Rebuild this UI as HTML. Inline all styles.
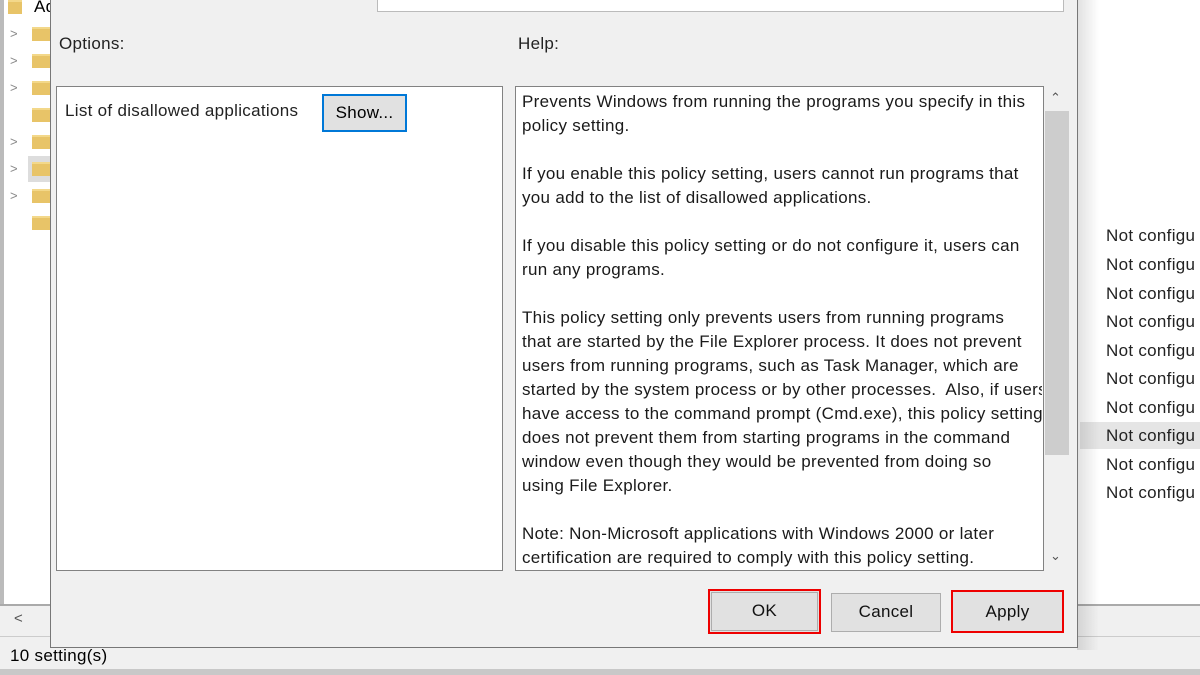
<!DOCTYPE html>
<html><head><style>
*{margin:0;padding:0;box-sizing:border-box}
body{width:1200px;height:675px;overflow:hidden;background:#fff;font-family:"Liberation Sans",sans-serif;position:relative;color:#000;letter-spacing:.3px}
.a{position:absolute}
.fold{position:absolute;left:32px;width:18px;height:14px;background:#e8c468;border-top:2px solid #f3d88a}
.chev{position:absolute;left:10px;color:#888;font-size:13px}
.nc{position:absolute;left:1106px;font-size:17px;color:#222;white-space:nowrap}
.help{font-size:17px;line-height:24px;color:#1a1a1a;white-space:nowrap;letter-spacing:.3px;overflow:hidden;width:520px}
.btn{position:absolute;background:#e1e1e1;border:1px solid #adadad;font-size:17px;text-align:center;color:#111}
</style></head><body>
<div class="a" style="left:0;top:0;width:4px;height:640px;background:#bbb"></div>
<div class="fold" style="top:0;left:8px;width:14px"></div>
<div class="a" style="left:34px;top:-3px;font-size:17px">Ad</div>
<div class="a" style="left:28px;top:156px;width:24px;height:26px;background:#ddd"></div>
<div class="chev" style="top:26px">&gt;</div><div class="fold" style="top:27px"></div>
<div class="chev" style="top:53px">&gt;</div><div class="fold" style="top:54px"></div>
<div class="chev" style="top:80px">&gt;</div><div class="fold" style="top:81px"></div>
<div class="fold" style="top:108px"></div>
<div class="chev" style="top:134px">&gt;</div><div class="fold" style="top:135px"></div>
<div class="chev" style="top:161px">&gt;</div><div class="fold" style="top:162px"></div>
<div class="chev" style="top:188px">&gt;</div><div class="fold" style="top:189px"></div>
<div class="fold" style="top:216px"></div>
<div class="a" style="left:1080px;top:422px;width:120px;height:27px;background:#e5e5e5"></div>
<div class="nc" style="top:226px">Not configu</div>
<div class="nc" style="top:255px">Not configu</div>
<div class="nc" style="top:284px">Not configu</div>
<div class="nc" style="top:312px">Not configu</div>
<div class="nc" style="top:341px">Not configu</div>
<div class="nc" style="top:369px">Not configu</div>
<div class="nc" style="top:398px">Not configu</div>
<div class="nc" style="top:426px">Not configu</div>
<div class="nc" style="top:455px">Not configu</div>
<div class="nc" style="top:483px">Not configu</div>
<div class="a" style="left:0;top:604px;width:1200px;height:2px;background:#aaa"></div>
<div class="a" style="left:0;top:606px;width:1200px;height:30px;background:#f0f0f0"></div>
<div class="a" style="left:14px;top:610px;font-size:15px;color:#555">&lt;</div>
<div class="a" style="left:0;top:636px;width:1200px;height:1px;background:#ccc"></div>
<div class="a" style="left:0;top:637px;width:1200px;height:33px;background:#f0f0f0"></div>
<div class="a" style="left:10px;top:646px;font-size:17px">10 setting(s)</div>
<div class="a" style="left:0;top:669px;width:1200px;height:6px;background:#c8c8c8"></div>
<div class="a" style="left:1077px;top:0;width:22px;height:650px;background:linear-gradient(to right,rgba(0,0,0,.12),rgba(0,0,0,0))"></div>
<div class="a" style="left:50px;top:0;width:1028px;height:648px;background:#f0f0f0;border:1px solid #777;border-top:none"></div>
<div class="a" style="left:377px;top:-2px;width:687px;height:14px;background:#fff;border:1px solid #bbb"></div>
<div class="a" style="left:59px;top:34px;font-size:17px;color:#222">Options:</div>
<div class="a" style="left:518px;top:34px;font-size:17px;color:#222">Help:</div>
<div class="a" style="left:56px;top:86px;width:447px;height:485px;background:#fff;border:1px solid #828282"></div>
<div class="a" style="left:65px;top:101px;font-size:17px;color:#222">List of disallowed applications</div>
<div class="a" style="left:322px;top:94px;width:85px;height:38px;border:2px solid #0078d7;background:#e1e1e1;font-size:17px;text-align:center;line-height:33px">Show...</div>
<div class="a" style="left:515px;top:86px;width:529px;height:485px;background:#fff;border:1px solid #828282"></div>
<div class="a help" style="left:522px;top:90px">
Prevents Windows from running the programs you specify in this<br>policy setting.<br><br>
If you enable this policy setting, users cannot run programs that<br>you add to the list of disallowed applications.<br><br>
If you disable this policy setting or do not configure it, users can<br>run any programs.<br><br>
This policy setting only prevents users from running programs<br>that are started by the File Explorer process. It does not prevent<br>users from running programs, such as Task Manager, which are<br>started by the system process or by other processes.&nbsp; Also, if users<br>have access to the command prompt (Cmd.exe), this policy setting<br>does not prevent them from starting programs in the command<br>window even though they would be prevented from doing so<br>using File Explorer.<br><br>
Note: Non-Microsoft applications with Windows 2000 or later<br>certification are required to comply with this policy setting.
</div>
<div class="a" style="left:1044px;top:86px;width:26px;height:485px;background:#f0f0f0"></div>
<div class="a" style="left:1045px;top:111px;width:24px;height:344px;background:#cdcdcd"></div>
<div class="a" style="left:1050px;top:90px;font-size:13px;color:#555">&#8963;</div>
<div class="a" style="left:1050px;top:548px;font-size:13px;color:#555">&#8964;</div>
<div class="btn" style="left:708px;top:589px;width:113px;height:45px;border:2px solid #e00;line-height:40px"><div style="position:absolute;inset:1px;border:1px solid #adadad"></div>OK</div>
<div class="btn" style="left:831px;top:593px;width:110px;height:39px;line-height:36px">Cancel</div>
<div class="btn" style="left:951px;top:590px;width:113px;height:43px;border:2px solid #e00;line-height:39px">Apply</div>
</body></html>
